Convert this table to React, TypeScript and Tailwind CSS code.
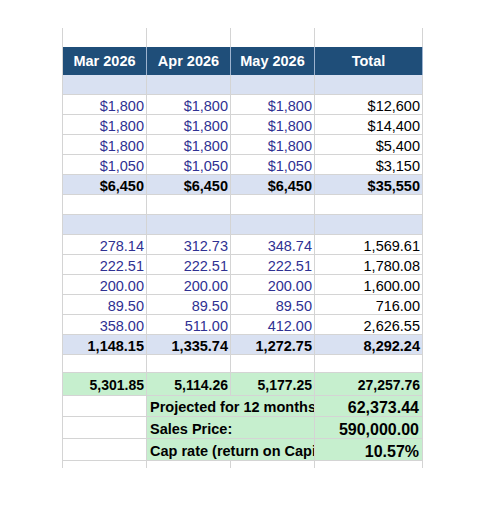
import React from "react";

const F = { fontFamily: '"Liberation Sans", Arial, sans-serif' };

type Cell = { t?: string; cls?: string };

const BLUE = "text-[#2f3192]";

function Row({
  h,
  bg = "",
  cells,
  bb = true,
  cellCls = "",
}: {
  h: string;
  bg?: string;
  cells: Cell[];
  bb?: boolean;
  cellCls?: string;
}) {
  const widths = ["w-[84px]", "w-[84px]", "w-[84px]", "w-[108px]"];
  return (
    <div className={`flex ${h}`}>
      {cells.map((c, i) => (
        <div
          key={i}
          className={`${widths[i]} ${bg} border-r border-[#d4d4d4] ${bb ? "border-b" : ""} flex items-end justify-end pr-[2px] leading-[15px] text-[14.5px] overflow-hidden whitespace-nowrap ${cellCls} ${c.cls ?? ""}`}
        >
          {c.t ?? ""}
        </div>
      ))}
    </div>
  );
}

function DataRow({ v, total }: { v: string[]; total: string }) {
  return (
    <Row
      h="h-[20px]"
      cells={[
        { t: v[0], cls: BLUE },
        { t: v[1], cls: BLUE },
        { t: v[2], cls: BLUE },
        { t: total, cls: "text-black" },
      ]}
    />
  );
}

function TotalRow({ v }: { v: string[] }) {
  return (
    <Row
      h="h-[20px]"
      bg="bg-[#d9e1f2]"
      cells={v.map((t) => ({ t, cls: "font-bold text-black" }))}
    />
  );
}

const empty4: Cell[] = [{}, {}, {}, {}];

function LabelRow({ label, value, h }: { label: string; value: string; h: string }) {
  return (
    <div className={`flex ${h}`}>
      <div className="w-[84px] border-r border-b border-[#d4d4d4]" />
      <div className="w-[168px] bg-[#c6efce] border-r border-b border-[#d4d4d4] flex items-end pl-[3px] pb-[1px] leading-[15px] text-[14.5px] font-bold text-black overflow-hidden whitespace-nowrap">
        {label}
      </div>
      <div className="w-[108px] bg-[#c6efce] border-r border-b border-[#d4d4d4] flex items-end justify-end pr-[3px] pb-[1px] leading-[15px] text-[16px] font-bold text-black overflow-hidden whitespace-nowrap">
        {value}
      </div>
    </div>
  );
}

export default function App() {
  return (
    <div className="w-[491px] h-[528px] bg-white" style={F}>
      <div className="pt-[28px] pl-[62px]">
        <div className="w-[361px] border-l border-[#d4d4d4]">
          <Row h="h-[19px]" bb={false} cells={empty4} />
          <div className="flex h-[28px]">
            {["Mar 2026", "Apr 2026", "May 2026", "Total"].map((t, i) => (
              <div
                key={t}
                className={`${i === 3 ? "w-[108px]" : "w-[84px]"} bg-[#1f4e79] border-r border-[#9db3cf] flex items-center justify-center text-white font-bold text-[14.5px] leading-[15px]`}
              >
                {t}
              </div>
            ))}
          </div>
          <Row h="h-[20px]" bg="bg-[#d9e1f2]" cells={empty4} />
          <DataRow v={["$1,800", "$1,800", "$1,800"]} total="$12,600" />
          <DataRow v={["$1,800", "$1,800", "$1,800"]} total="$14,400" />
          <DataRow v={["$1,800", "$1,800", "$1,800"]} total="$5,400" />
          <DataRow v={["$1,050", "$1,050", "$1,050"]} total="$3,150" />
          <TotalRow v={["$6,450", "$6,450", "$6,450", "$35,550"]} />
          <Row h="h-[20px]" cells={empty4} />
          <Row h="h-[20px]" bg="bg-[#d9e1f2]" cells={empty4} />
          <DataRow v={["278.14", "312.73", "348.74"]} total="1,569.61" />
          <DataRow v={["222.51", "222.51", "222.51"]} total="1,780.08" />
          <DataRow v={["200.00", "200.00", "200.00"]} total="1,600.00" />
          <DataRow v={["89.50", "89.50", "89.50"]} total="716.00" />
          <DataRow v={["358.00", "511.00", "412.00"]} total="2,626.55" />
          <TotalRow v={["1,148.15", "1,335.74", "1,272.75", "8,292.24"]} />
          <Row h="h-[18px]" cells={empty4} />
          <Row
            h="h-[23px]"
            bg="bg-[#c6efce]"
            cellCls="pb-[2px] text-[14px]"
            cells={["5,301.85", "5,114.26", "5,177.25", "27,257.76"].map((t) => ({
              t,
              cls: "font-bold text-black",
            }))}
          />
          <LabelRow h="h-[21px]" label="Projected for 12 months" value="62,373.44" />
          <LabelRow h="h-[22px]" label="Sales Price:" value="590,000.00" />
          <LabelRow h="h-[22px]" label="Cap rate (return on Capital)" value="10.57%" />
          <Row h="h-[7px]" bb={false} cells={empty4} />
        </div>
      </div>
    </div>
  );
}
